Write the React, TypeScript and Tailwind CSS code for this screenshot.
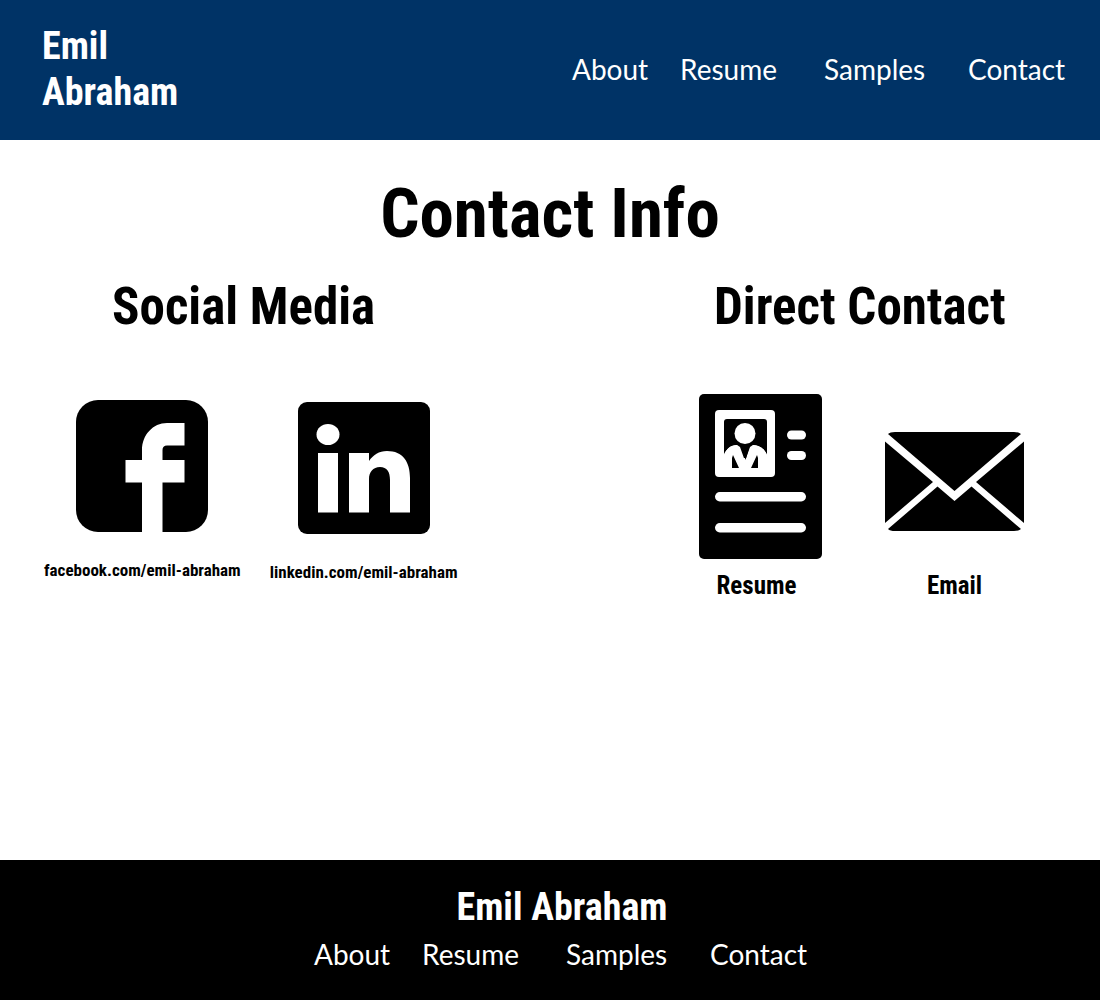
const LINKS = ["About", "Resume", "Samples", "Contact"];

const HEADING = "font-['Roboto_Condensed','Liberation_Sans_Narrow',sans-serif] font-bold";

function Nav({ label }: { label: string }) {
  return (
    <nav aria-label={label}>
      <ul className="grid grid-cols-[108px_144px_144px_96px] font-['Lato',sans-serif] text-[28px] leading-10">
        {LINKS.map((link) => (
          <li key={link}>
            <a href={`#${link.toLowerCase()}`}>{link}</a>
          </li>
        ))}
      </ul>
    </nav>
  );
}

function FacebookIcon() {
  return (
    <svg viewBox="0 0 132 132" className="size-[132px]" aria-hidden="true">
      <rect width="132" height="132" rx="22" />
      <path fill="#fff" d="M66 132V82.500H49.500V60H66V50C66 35 77 23 91 23H108.500V45.500H91Q86.500 45.500 86.500 50V60H108.500V82.500H86.500V132Z" />
    </svg>
  );
}

function LinkedinIcon() {
  return (
    <svg viewBox="0 0 132 132" className="size-[132px]" aria-hidden="true">
      <rect width="132" height="132" rx="9" />
      <g fill="#fff">
        <ellipse cx="30" cy="32.500" rx="11.500" ry="10.500" />
        <path d="M20 51H40V110.500H20ZM51 51H71V59C75 53 81 49 89 49C105 49 112 60 112 76V110.500H92V78C92 70 89 65 82 65C75 65 71 70 71 77V110.500H51Z" />
      </g>
    </svg>
  );
}

function ResumeIcon() {
  return (
    <svg viewBox="0 0 123 165" className="h-[165px] w-[123px]" aria-hidden="true">
      <rect width="123" height="165" rx="5" />
      <rect x="16" y="16" width="60" height="67" rx="4" fill="#fff" />
      <path d="M28 25H65Q68 25 68 28V61C65 54 60 51 54 51L49 64H43L38 51C32 51 27 55 25 61V28Q25 25 28 25Z" />
      <path fill="#fff" d="M25 61C27 55 32 51 38 51L41 53L46 67L51 53L54 51C61 52 66 55 68 61V79H25Z" />
      <path d="M42 51H51L46.500 66ZM34 61L40 74H33V64ZM58 61L52 74H59V64Z" />
      <circle cx="46" cy="39.500" r="10.500" fill="#fff" />
      <g fill="#fff">
        <rect x="88" y="36.500" width="19" height="9" rx="4.500" />
        <rect x="88" y="57" width="19" height="9" rx="4.500" />
        <rect x="16" y="98" width="91" height="9.500" rx="4.750" />
        <rect x="16" y="129" width="91" height="9.500" rx="4.750" />
      </g>
    </svg>
  );
}

function EmailIcon() {
  return (
    <svg viewBox="0 0 139 99" className="h-[99px] w-[139px]" aria-hidden="true">
      <path d="M3 2Q5 0 10 0H129Q134 0 136 2L69.500 59ZM0 9.500L48 50L0 91ZM139 9.500L91 50L139 91ZM3 97L52.500 54.500L69.500 69L86.500 54.500L136 97Q134 99 129 99H10Q5 99 3 97Z" />
    </svg>
  );
}

export default function App() {
  return (
    <div className="flex min-h-screen flex-col bg-white text-black">
      <header className="flex items-center justify-between bg-[#003366] pt-[23px] pr-9 pb-[25px] pl-[42px] text-white">
        <a href="#home" className={`${HEADING} w-min text-[38px] leading-[46px]`}>
          Emil Abraham
        </a>
        <Nav label="Main" />
      </header>

      <main className={`${HEADING} grow pt-8`}>
        <h1 className="text-center text-[69px] leading-[84px]">Contact Info</h1>
        <div className="mt-[21px] flex justify-between pr-[76px] pl-11">
          <section>
            <h2 className="pl-[68px] text-[51px] leading-[60px]">Social Media</h2>
            <div className="mt-[63px] flex gap-[29px]">
              <a href="https://facebook.com/emil-abraham" className="flex flex-col items-center gap-[26px]">
                <FacebookIcon />
                <span className="text-[17px] leading-6">facebook.com/emil-abraham</span>
              </a>
              <a href="https://linkedin.com/emil-abraham" className="flex flex-col items-center gap-[26px] pt-0.5">
                <LinkedinIcon />
                <span className="text-[17px] leading-6">linkedin.com/emil-abraham</span>
              </a>
            </div>
          </section>
          <section>
            <h2 className="pl-[15px] text-[51px] leading-[60px]">Direct Contact</h2>
            <div className="mt-[57px] flex items-end gap-[63px]">
              <a href="#resume" className="flex flex-col items-center gap-[11px]">
                <ResumeIcon />
                <span className="pr-2 text-[25px] leading-8">Resume</span>
              </a>
              <a href="mailto:emil@abraham.com" className="flex flex-col items-center gap-[39px]">
                <EmailIcon />
                <span className="text-[25px] leading-8">Email</span>
              </a>
            </div>
          </section>
        </div>
      </main>

      <footer className="flex flex-col items-center bg-black py-6 text-white">
        <p className={`${HEADING} pl-6 text-[38px] leading-[46px]`}>Emil Abraham</p>
        <div className="mt-1 pb-0.5 pl-5">
          <Nav label="Footer" />
        </div>
      </footer>
    </div>
  );
}
